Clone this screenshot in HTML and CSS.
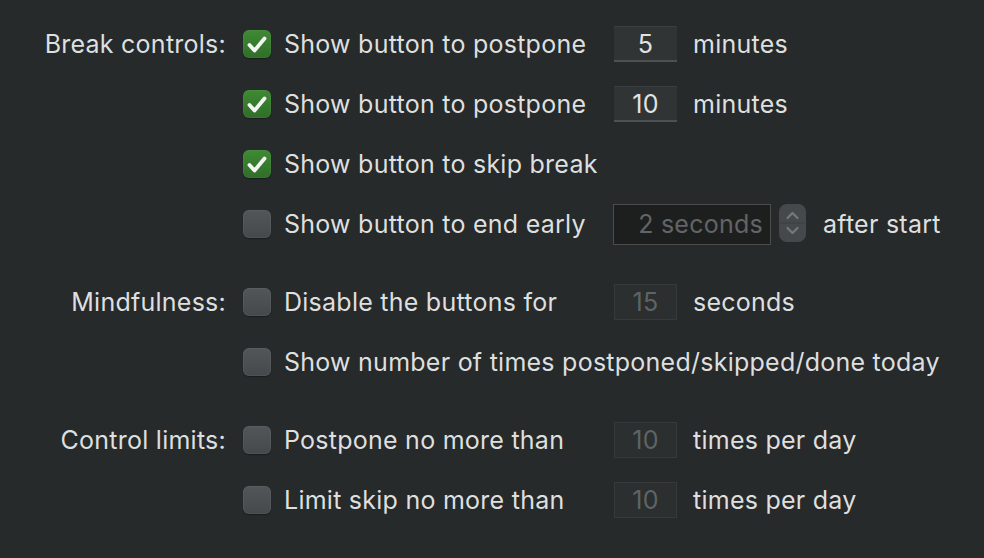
FILE: index.html
```html
<!DOCTYPE html>
<html>
<head>
<meta charset="utf-8">
<link rel="stylesheet" href="styles.css">
</head>
<body>
<div class="panel">
  <div class="group">
    <div class="label">Break controls:</div>
    <div class="rows">
      <div class="row">
        <span class="cb on"><svg viewBox="0 0 28 28"><path d="M6.5 15 L11.5 20.5 L21.5 8.5" /></svg></span>
        <span class="text">Show button to postpone</span>
        <span class="field">5</span>
        <span class="unit">minutes</span>
      </div>
      <div class="row">
        <span class="cb on"><svg viewBox="0 0 28 28"><path d="M6.5 15 L11.5 20.5 L21.5 8.5" /></svg></span>
        <span class="text">Show button to postpone</span>
        <span class="field">10</span>
        <span class="unit">minutes</span>
      </div>
      <div class="row">
        <span class="cb on"><svg viewBox="0 0 28 28"><path d="M6.5 15 L11.5 20.5 L21.5 8.5" /></svg></span>
        <span class="text">Show button to skip break</span>
      </div>
      <div class="row">
        <span class="cb"></span>
        <span class="text">Show button to end early</span>
        <span class="field dark">2 seconds</span>
        <span class="stepper">
          <svg viewBox="0 0 27 38"><path class="chev" d="M8.5 14 L13.5 9 L18.5 14" /><path class="div" d="M1 19 H26" /><path class="chev" d="M8.5 24 L13.5 29 L18.5 24" /></svg>
        </span>
        <span class="unit after">after start</span>
      </div>
    </div>
  </div>
  <div class="group">
    <div class="label">Mindfulness:</div>
    <div class="rows">
      <div class="row">
        <span class="cb"></span>
        <span class="text">Disable the buttons for</span>
        <span class="field off">15</span>
        <span class="unit">seconds</span>
      </div>
      <div class="row">
        <span class="cb"></span>
        <span class="text wide">Show number of times postponed/skipped/done today</span>
      </div>
    </div>
  </div>
  <div class="group">
    <div class="label">Control limits:</div>
    <div class="rows">
      <div class="row">
        <span class="cb"></span>
        <span class="text">Postpone no more than</span>
        <span class="field off">10</span>
        <span class="unit">times per day</span>
      </div>
      <div class="row">
        <span class="cb"></span>
        <span class="text">Limit skip no more than</span>
        <span class="field off">10</span>
        <span class="unit">times per day</span>
      </div>
    </div>
  </div>
</div>
</body>
</html>
```
FILE: styles.css
```css
html, body {
  margin: 0;
  padding: 0;
  background: #262a2b;
}
body {
  width: 984px;
  height: 558px;
  overflow: hidden;
  font-family: Inter, "Noto Sans", sans-serif;
  font-size: 25px;
  letter-spacing: 0.25px;
  color: #dedfdf;
}
.panel {
  padding-top: 14px;
  display: flex;
  flex-direction: column;
  gap: 18px;
}
.group {
  display: grid;
  grid-template-columns: 226px 1fr;
}
.label {
  text-align: right;
  height: 60px;
  line-height: 60px;
}
.rows {
  display: flex;
  flex-direction: column;
}
.row {
  height: 60px;
  display: flex;
  align-items: center;
  padding-left: 17px;
}
.cb {
  width: 28px;
  height: 28px;
  border-radius: 6px;
  box-sizing: border-box;
  background: linear-gradient(#535659, #46494b);
  box-shadow: inset 0 0 0 1px rgba(255,255,255,0.05), 0 1px 1px rgba(0,0,0,0.3);
  flex: none;
  margin-right: 13px;
}
.cb.on {
  background: linear-gradient(#3f8a34, #2f6e27);
}
.cb svg {
  width: 28px;
  height: 28px;
  display: block;
}
.cb svg path {
  fill: none;
  stroke: #f4f4f4;
  stroke-width: 3.8;
  stroke-linecap: round;
  stroke-linejoin: round;
}
.text {
  width: 330px;
  flex: none;
  white-space: nowrap;
}
.text.wide {
  width: auto;
}
.field {
  width: 63px;
  height: 36px;
  box-sizing: border-box;
  background: #303435;
  border-top: 1px solid #3a3e3f;
  border-bottom: 2px solid #4d5152;
  text-align: center;
  line-height: 34px;
  color: #e2e2e2;
  flex: none;
  margin-right: 16px;
}
.field.off {
  background: #2b2f30;
  border: 1px solid #363a3b;
  color: #5f6364;
  line-height: 34px;
}
.field.dark {
  width: 158px;
  height: 41px;
  background: #1d1e1e;
  border: 1px solid #4b4d4d;
  color: #626465;
  text-align: right;
  padding-right: 7px;
  line-height: 39px;
  margin-left: -1px;
  margin-right: 8px;
}
.stepper {
  width: 27px;
  height: 38px;
  border-radius: 8px;
  background: #46494b;
  flex: none;
  margin-right: 17px;
  margin-top: -2px;
}
.stepper svg {
  display: block;
  width: 27px;
  height: 38px;
}
.stepper .chev {
  fill: none;
  stroke: #74787a;
  stroke-width: 2.2;
  stroke-linecap: round;
  stroke-linejoin: round;
}
.stepper .div {
  stroke: #3a3d3f;
  stroke-width: 1;
}
.unit {
  white-space: nowrap;
}
```
